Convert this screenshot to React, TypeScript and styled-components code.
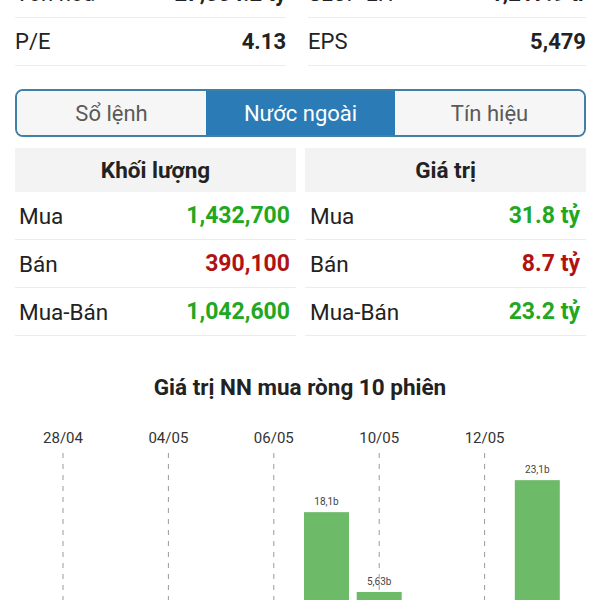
import React from 'react';
import styled, { createGlobalStyle } from 'styled-components';

const Global = createGlobalStyle`
    html, body {
        margin: 0;
        padding: 0;
        background: #fff;
    }
    body {
        font-family: Roboto, "Noto Sans", sans-serif;
        color: #222;
        width: 600px;
        height: 600px;
        overflow: hidden;
    }
`;

const Page = styled.div`
    width: 600px;
    height: 600px;
    overflow: hidden;
`;

const StatsGrid = styled.div`
    display: grid;
    grid-template-columns: 271px 278px;
    column-gap: 22px;
    padding: 0 14px 0 15px;
    margin-top: -30px;
`;

const StatRow = styled.div`
    height: 47px;
    display: flex;
    align-items: center;
    justify-content: space-between;
    border-bottom: 1px solid #ececec;
    font-size: 22px;
`;

const StatLabel = styled.span`
    color: #222;
`;

const StatValue = styled.span`
    font-weight: 700;
    color: #222;
`;

const Tabs = styled.div`
    margin: 23px 14px 0 15px;
    height: 48px;
    box-sizing: border-box;
    border: 2px solid #3f80a6;
    border-radius: 8px;
    overflow: hidden;
    display: flex;
`;

const Tab = styled.div<{ $active?: boolean }>`
    flex: 1;
    display: flex;
    align-items: center;
    justify-content: center;
    font-size: 22px;
    background: ${(p) => (p.$active ? '#2a7bb6' : '#f6f6f6')};
    color: ${(p) => (p.$active ? '#fff' : '#5a5a5a')};
`;

const Tables = styled.div`
    display: grid;
    grid-template-columns: 281px 281px;
    column-gap: 9px;
    padding: 0 14px 0 15px;
    margin-top: 11px;
`;

const Table = styled.div`
    display: flex;
    flex-direction: column;
`;

const TableHead = styled.div`
    height: 44px;
    flex-shrink: 0;
    background: #f3f3f3;
    display: flex;
    align-items: center;
    justify-content: center;
    font-size: 22.5px;
    font-weight: 700;
    color: #222;
`;

const TableRow = styled.div<{ $pad: number }>`
    height: 48px;
    flex-shrink: 0;
    box-sizing: border-box;
    display: flex;
    align-items: center;
    justify-content: space-between;
    padding: 0 6px 0 ${(p) => p.$pad}px;
    border-bottom: 1px solid #ececec;
    font-size: 22.5px;
`;

const RowValue = styled.span<{ $up: boolean }>`
    font-weight: 700;
    font-size: 23px;
    color: ${(p) => (p.$up ? '#22a722' : '#b01212')};
`;

const ChartTitle = styled.div`
    margin-top: 38px;
    text-align: center;
    font-size: 22.5px;
    font-weight: 700;
    color: #222;
`;

const ChartBox = styled.div`
    margin-top: 22px;
    height: 260px;
`;

type Row = { label: string; value: string; up: boolean };

const volumeRows: Row[] = [
    { label: 'Mua', value: '1,432,700', up: true },
    { label: 'Bán', value: '390,100', up: false },
    { label: 'Mua-Bán', value: '1,042,600', up: true },
];

const valueRows: Row[] = [
    { label: 'Mua', value: '31.8 tỷ', up: true },
    { label: 'Bán', value: '8.7 tỷ', up: false },
    { label: 'Mua-Bán', value: '23.2 tỷ', up: true },
];

const sessions = [
    { date: '28/04', v: -4.2 },
    { date: '29/04', v: -2.1 },
    { date: '04/05', v: -6.3 },
    { date: '05/05', v: -1.5 },
    { date: '06/05', v: -3.4 },
    { date: '09/05', v: 18.1, label: '18,1b' },
    { date: '10/05', v: 5.63, label: '5,63b' },
    { date: '11/05', v: -2.0 },
    { date: '12/05', v: -5.1 },
    { date: '13/05', v: 23.1, label: '23,1b' },
];

const Chart: React.FC = () => {
    // zero line falls just below the window, so only the positive bars show
    const base = 206;
    const scale = 6.4;
    const step = 52.7;
    return (
        <svg width="600" height="260" viewBox="0 0 600 260">
            {sessions.map((s, i) => {
                const cx = 63 + i * step;
                if (i % 2 !== 0) return null;
                return (
                    <g key={s.date}>
                        <text x={cx} y={21} textAnchor="middle" fontSize="15" fill="#333" fontFamily="Roboto, sans-serif">
                            {s.date}
                        </text>
                        <line x1={cx} y1={31} x2={cx} y2={260} stroke="#9a9a9a" strokeWidth="1" strokeDasharray="5 6" />
                    </g>
                );
            })}
            {sessions.map((s, i) => {
                const cx = 63 + i * step;
                const h = Math.abs(s.v) * scale;
                const y = s.v >= 0 ? base - h : base;
                return (
                    <g key={'b' + s.date}>
                        <rect x={cx - 22.5} y={y} width="45" height={h} fill="#6dbb68" />
                        {s.label && (
                            <text x={cx} y={y - 7} textAnchor="middle" fontSize="10" fill="#444" fontFamily="Roboto, sans-serif">
                                {s.label}
                            </text>
                        )}
                    </g>
                );
            })}
        </svg>
    );
};

const App: React.FC = () => {
    return (
        <Page>
            <Global />
            <StatsGrid>
                <StatRow>
                    <StatLabel>Vốn hóa</StatLabel>
                    <StatValue>27,554.2 tỷ</StatValue>
                </StatRow>
                <StatRow>
                    <StatLabel>SLCP LH</StatLabel>
                    <StatValue>1,217.9 tr</StatValue>
                </StatRow>
                <StatRow>
                    <StatLabel>P/E</StatLabel>
                    <StatValue>4.13</StatValue>
                </StatRow>
                <StatRow>
                    <StatLabel>EPS</StatLabel>
                    <StatValue>5,479</StatValue>
                </StatRow>
            </StatsGrid>
            <Tabs>
                <Tab>Sổ lệnh</Tab>
                <Tab $active>Nước ngoài</Tab>
                <Tab>Tín hiệu</Tab>
            </Tabs>
            <Tables>
                <Table>
                    <TableHead>Khối lượng</TableHead>
                    {volumeRows.map((r) => (
                        <TableRow key={r.label} $pad={4}>
                            <span>{r.label}</span>
                            <RowValue $up={r.up}>{r.value}</RowValue>
                        </TableRow>
                    ))}
                </Table>
                <Table>
                    <TableHead>Giá trị</TableHead>
                    {valueRows.map((r) => (
                        <TableRow key={r.label} $pad={5}>
                            <span>{r.label}</span>
                            <RowValue $up={r.up}>{r.value}</RowValue>
                        </TableRow>
                    ))}
                </Table>
            </Tables>
            <ChartTitle>Giá trị NN mua ròng 10 phiên</ChartTitle>
            <ChartBox>
                <Chart />
            </ChartBox>
        </Page>
    );
};

export default App;
